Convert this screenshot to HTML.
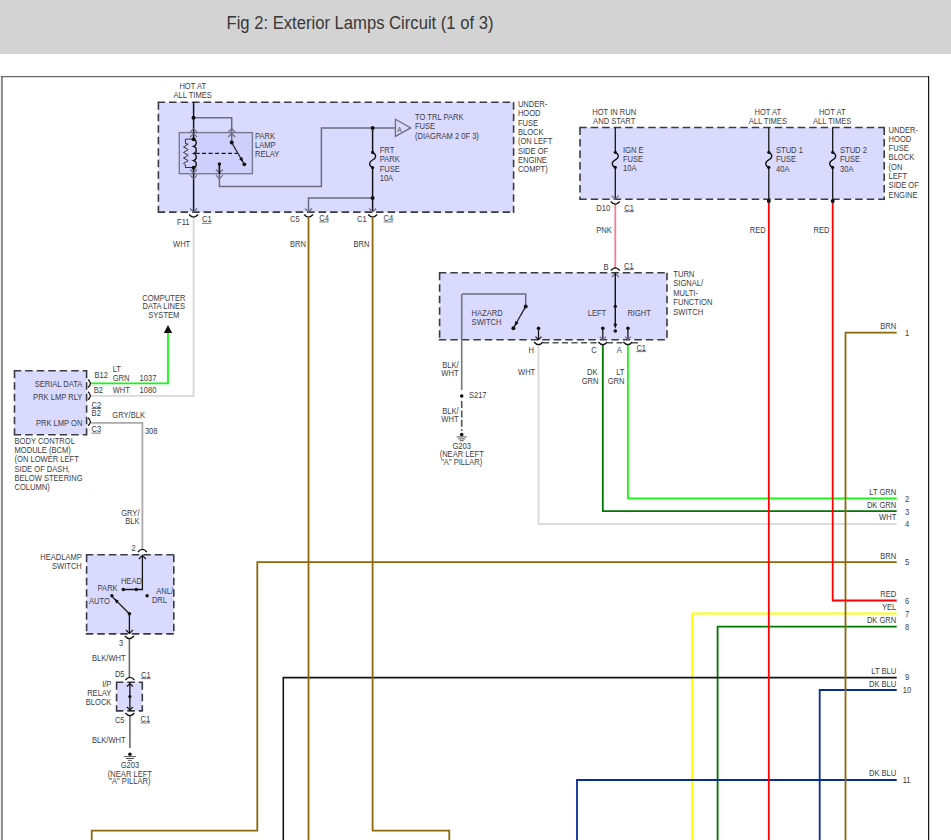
<!DOCTYPE html>
<html><head><meta charset="utf-8"><style>
html,body{margin:0;padding:0;background:#fff;width:951px;height:840px;overflow:hidden}
#hdr{position:absolute;left:0;top:0;width:951px;height:54px;background:#d3d3d3}
svg{position:absolute;left:0;top:0}
text{font-family:"Liberation Sans",sans-serif}
</style></head><body>
<div id="hdr"></div>
<svg width="951" height="840" viewBox="0 0 951 840">
<text x="226.5" y="29.4" font-size="18" fill="#383838" textLength="267" lengthAdjust="spacingAndGlyphs">Fig 2: Exterior Lamps Circuit (1 of 3)</text>
<line x1="1.9" y1="76" x2="1.9" y2="845" stroke="#8a8a8a" stroke-width="2"/><line x1="1" y1="76.6" x2="929" y2="76.6" stroke="#6a6a6a" stroke-width="1.4"/><line x1="928.6" y1="76" x2="928.6" y2="845" stroke="#151515" stroke-width="1.2"/>
<rect x="158.40" y="102.20" width="355.20" height="109.90" fill="#dadaff"/>
<path d="M157.60,102.20H514.40M513.60,102.20V212.90M157.60,212.10H514.40M158.40,102.20V212.90" fill="none" stroke="#3a3a44" stroke-width="1.6" stroke-dasharray="7.5 4"/>
<rect x="580.00" y="127.50" width="304.20" height="71.70" fill="#dadaff"/>
<path d="M579.20,127.50H885.00M884.20,127.50V200.00M579.20,199.20H885.00M580.00,127.50V200.00" fill="none" stroke="#3a3a44" stroke-width="1.6" stroke-dasharray="7.5 4"/>
<rect x="439.60" y="272.80" width="227.40" height="66.90" fill="#dadaff"/>
<path d="M438.80,272.80H667.80M667.00,272.80V340.50M438.80,339.70H667.80M439.60,272.80V340.50" fill="none" stroke="#3a3a44" stroke-width="1.6" stroke-dasharray="7.5 4"/>
<rect x="14.50" y="370.80" width="72.10" height="63.90" fill="#dadaff"/>
<path d="M13.70,370.80H87.40M86.60,370.80V435.50M13.70,434.70H87.40M14.50,370.80V435.50" fill="none" stroke="#3a3a44" stroke-width="1.6" stroke-dasharray="7.5 4"/>
<rect x="86.60" y="554.70" width="87.20" height="79.20" fill="#dadaff"/>
<path d="M85.80,554.70H174.60M173.80,554.70V634.70M85.80,633.90H174.60M86.60,554.70V634.70" fill="none" stroke="#3a3a44" stroke-width="1.6" stroke-dasharray="7.5 4"/>
<rect x="116.60" y="682.30" width="25.70" height="28.60" fill="#dadaff"/>
<path d="M115.80,682.30H143.10M142.30,682.30V711.70M115.80,710.90H143.10M116.60,682.30V711.70" fill="none" stroke="#3a3a44" stroke-width="1.6" stroke-dasharray="7.5 4"/>
<rect x="179.3" y="132.6" width="73.1" height="41.1" fill="#d0d0fc" stroke="#7a7a92" stroke-width="1.4"/>
<polyline points="692.10,842.00 692.10,613.50 896.70,613.50" fill="none" stroke="#ffff00" stroke-width="1.8" stroke-linejoin="miter"/>
<polyline points="717.60,842.00 717.60,626.70 896.70,626.70" fill="none" stroke="#007800" stroke-width="1.8" stroke-linejoin="miter"/>
<polyline points="538.50,344.00 538.50,524.20 896.70,524.20" fill="none" stroke="#d8d8d8" stroke-width="1.8" stroke-linejoin="miter"/>
<polyline points="602.80,344.00 602.80,511.20 896.70,511.20" fill="none" stroke="#007800" stroke-width="1.8" stroke-linejoin="miter"/>
<polyline points="627.90,344.00 627.90,498.30 896.70,498.30" fill="none" stroke="#12fa12" stroke-width="1.8" stroke-linejoin="miter"/>
<polyline points="283.30,842.00 283.30,677.60 896.70,677.60" fill="none" stroke="#141414" stroke-width="1.6" stroke-linejoin="miter"/>
<polyline points="577.00,842.00 577.00,780.00 896.70,780.00" fill="none" stroke="#082c98" stroke-width="1.8" stroke-linejoin="miter"/>
<polyline points="819.70,842.00 819.70,690.00 896.70,690.00" fill="none" stroke="#082c98" stroke-width="1.8" stroke-linejoin="miter"/>
<polyline points="896.70,562.20 257.30,562.20 257.30,830.70 91.70,830.70 91.70,842.00" fill="none" stroke="#8d660e" stroke-width="1.8" stroke-linejoin="miter"/>
<polyline points="308.50,218.00 308.50,842.00" fill="none" stroke="#8d660e" stroke-width="1.8" stroke-linejoin="miter"/>
<polyline points="372.60,218.00 372.60,830.70 449.30,830.70 449.30,842.00" fill="none" stroke="#8d660e" stroke-width="1.8" stroke-linejoin="miter"/>
<polyline points="896.70,332.70 845.50,332.70 845.50,842.00" fill="none" stroke="#8d660e" stroke-width="1.8" stroke-linejoin="miter"/>
<polyline points="768.80,201.00 768.80,842.00" fill="none" stroke="#ff0000" stroke-width="1.8" stroke-linejoin="miter"/>
<polyline points="832.70,201.00 832.70,600.50 896.70,600.50" fill="none" stroke="#ff0000" stroke-width="1.8" stroke-linejoin="miter"/>
<polyline points="615.30,204.00 615.30,269.00" fill="none" stroke="#f57d95" stroke-width="1.8" stroke-linejoin="miter"/>
<polyline points="193.60,217.60 193.60,395.80 91.20,395.80" fill="none" stroke="#d8d8d8" stroke-width="1.8" stroke-linejoin="miter"/>
<polyline points="91.20,383.40 168.00,383.40 168.00,333.00" fill="none" stroke="#12fa12" stroke-width="1.8" stroke-linejoin="miter"/>
<polygon points="168,325 163.8,333 172.2,333" fill="#111"/>
<polyline points="91.20,422.80 142.40,422.80 142.40,550.00" fill="none" stroke="#a9a9a9" stroke-width="1.8" stroke-linejoin="miter"/>
<polyline points="129.40,638.00 129.40,678.00" fill="none" stroke="#6a6a6a" stroke-width="1.6" stroke-linejoin="miter"/>
<polyline points="129.90,715.00 129.90,748.00" fill="none" stroke="#6a6a6a" stroke-width="1.6" stroke-linejoin="miter"/>
<polyline points="461.70,294.10 461.70,390.00" fill="none" stroke="#777" stroke-width="1.6" stroke-linejoin="miter"/>
<line x1="461.7" y1="401" x2="461.7" y2="431" stroke="#555" stroke-width="1.6" stroke-dasharray="7 2.4"/>
<polyline points="193.60,102.00 193.60,139.30" fill="none" stroke="#141414" stroke-width="1.5" stroke-linejoin="miter"/>
<polyline points="193.60,167.70 193.60,212.00" fill="none" stroke="#141414" stroke-width="1.5" stroke-linejoin="miter"/>
<polyline points="193.50,117.80 231.70,117.80 231.70,142.60" fill="none" stroke="#6c6c80" stroke-width="1.5" stroke-linejoin="miter"/>
<polyline points="190.1,132.1 193.6,128.6 197.1,132.1" fill="none" stroke="#6a6a80" stroke-width="1.1"/>
<polyline points="190.1,137.0 193.6,133.5 197.1,137.0" fill="none" stroke="#6a6a80" stroke-width="1.1"/>
<polyline points="228.2,132.1 231.7,128.6 235.2,132.1" fill="none" stroke="#6a6a80" stroke-width="1.1"/>
<polyline points="228.2,137.0 231.7,133.5 235.2,137.0" fill="none" stroke="#6a6a80" stroke-width="1.1"/>
<polyline points="190.1,169.5 193.6,173.0 197.1,169.5" fill="none" stroke="#6a6a80" stroke-width="1.1"/>
<polyline points="190.1,175.1 193.6,178.6 197.1,175.1" fill="none" stroke="#6a6a80" stroke-width="1.1"/>
<polyline points="215.9,169.5 219.4,173.0 222.9,169.5" fill="none" stroke="#6a6a80" stroke-width="1.1"/>
<polyline points="215.9,175.1 219.4,178.6 222.9,175.1" fill="none" stroke="#6a6a80" stroke-width="1.1"/>
<polyline points="190.1,208.5 193.6,212.0 197.1,208.5" fill="none" stroke="#6a6a80" stroke-width="1.1"/>
<path d="M193.6,139.3 C197.2,140.37 197.2,145.34 193.6,146.40 C197.2,147.47 197.2,152.44 193.6,153.50 C197.2,154.56 197.2,159.53 193.6,160.60 C197.2,161.66 197.2,166.63 193.6,167.70" fill="none" stroke="#111" stroke-width="1.3"/>
<polyline points="193.6,139.1 185.4,139.1 185.4,143.6 188.2,144.1 183.5,147.0 188.2,149.6 183.5,152.5 188.2,155.3 183.5,158.0 188.2,160.6 183.5,163.4 185.4,164.9 185.4,167.5 193.6,167.5" fill="none" stroke="#333" stroke-width="1"/>
<line x1="195.6" y1="153.4" x2="237.6" y2="153.4" stroke="#111" stroke-width="1.2" stroke-dasharray="4 2.5"/>
<polyline points="231.70,142.60 244.30,164.30" fill="none" stroke="#222" stroke-width="1.2" stroke-linejoin="miter"/>
<polyline points="219.40,164.00 219.40,186.50 321.40,186.50 321.40,127.90 395.40,127.90" fill="none" stroke="#6c6c80" stroke-width="1.5" stroke-linejoin="miter"/>
<polyline points="219.40,164.00 219.40,174.00" fill="none" stroke="#141414" stroke-width="1.5" stroke-linejoin="miter"/>
<polyline points="372.60,127.90 372.60,152.40" fill="none" stroke="#141414" stroke-width="1.5" stroke-linejoin="miter"/>
<polyline points="372.60,167.60 372.60,212.00" fill="none" stroke="#141414" stroke-width="1.5" stroke-linejoin="miter"/>
<path d="M372.6,152.4 C376.6,154.4 376.6,158.0 372.6,160.0 C368.6,162.0 368.6,165.6 372.6,167.6" fill="none" stroke="#111" stroke-width="1.3"/>
<polyline points="372.60,197.90 308.50,197.90 308.50,212.00" fill="none" stroke="#6c6c80" stroke-width="1.5" stroke-linejoin="miter"/>
<polyline points="305.0,208.5 308.5,212 312.0,208.5" fill="none" stroke="#6a6a80" stroke-width="1.1"/>
<polyline points="369.1,208.5 372.6,212 376.1,208.5" fill="none" stroke="#6a6a80" stroke-width="1.1"/>
<polygon points="395.4,119.3 395.4,136.4 410.7,127.9" fill="none" stroke="#6c6c80" stroke-width="1.3"/>
<text transform="translate(397.20,131.60) scale(0.88,1)" text-anchor="start" font-size="7.5" fill="#555">A</text>
<path d="M189.1,214.5 Q193.6,219.7 198.1,214.5" fill="none" stroke="#111" stroke-width="1.3"/>
<path d="M304.0,214.5 Q308.5,219.7 313.0,214.5" fill="none" stroke="#111" stroke-width="1.3"/>
<path d="M368.1,214.5 Q372.6,219.7 377.1,214.5" fill="none" stroke="#111" stroke-width="1.3"/>
<polyline points="615.30,127.50 615.30,152.40" fill="none" stroke="#141414" stroke-width="1.3" stroke-linejoin="miter"/>
<polyline points="615.30,167.40 615.30,199.20" fill="none" stroke="#141414" stroke-width="1.3" stroke-linejoin="miter"/>
<path d="M615.3,152.3 C619.3,154.3 619.3,157.85000000000002 615.3,159.85000000000002 C611.3,161.85000000000002 611.3,165.4 615.3,167.4" fill="none" stroke="#111" stroke-width="1.3"/>
<polyline points="768.80,127.50 768.80,152.40" fill="none" stroke="#141414" stroke-width="1.3" stroke-linejoin="miter"/>
<polyline points="768.80,167.40 768.80,199.20" fill="none" stroke="#141414" stroke-width="1.3" stroke-linejoin="miter"/>
<path d="M768.8,152.3 C772.8,154.3 772.8,157.85000000000002 768.8,159.85000000000002 C764.8,161.85000000000002 764.8,165.4 768.8,167.4" fill="none" stroke="#111" stroke-width="1.3"/>
<polyline points="832.70,127.50 832.70,152.40" fill="none" stroke="#141414" stroke-width="1.3" stroke-linejoin="miter"/>
<polyline points="832.70,167.40 832.70,199.20" fill="none" stroke="#141414" stroke-width="1.3" stroke-linejoin="miter"/>
<path d="M832.7,152.3 C836.7,154.3 836.7,157.85000000000002 832.7,159.85000000000002 C828.7,161.85000000000002 828.7,165.4 832.7,167.4" fill="none" stroke="#111" stroke-width="1.3"/>
<polyline points="611.8,195.7 615.3,199.2 618.8,195.7" fill="none" stroke="#6a6a80" stroke-width="1.1"/>
<path d="M610.8,201.5 Q615.3,206.7 619.8,201.5" fill="none" stroke="#111" stroke-width="1.3"/>
<path d="M610.8,270.5 Q615.3,265.3 619.8,270.5" fill="none" stroke="#111" stroke-width="1.3"/>
<polyline points="611.8,277.0 615.3,273.5 618.8,277.0" fill="none" stroke="#6a6a80" stroke-width="1.1"/>
<polyline points="615.30,272.80 615.30,326.00" fill="none" stroke="#141414" stroke-width="1.4" stroke-linejoin="miter"/>
<polyline points="462.00,294.10 525.70,294.10 525.70,306.40" fill="none" stroke="#6c6c80" stroke-width="1.5" stroke-linejoin="miter"/>
<polyline points="525.70,306.40 513.40,328.30" fill="none" stroke="#222" stroke-width="1.3" stroke-linejoin="miter"/>
<polyline points="538.50,328.30 538.50,339.70" fill="none" stroke="#141414" stroke-width="1.3" stroke-linejoin="miter"/>
<polyline points="535.5,336.7 538.5,339.7 541.5,336.7" fill="none" stroke="#111" stroke-width="1.1"/>
<path d="M534.0,342 Q538.5,347.2 543.0,342" fill="none" stroke="#111" stroke-width="1.3"/>
<polyline points="602.80,328.30 602.80,339.70" fill="none" stroke="#141414" stroke-width="1.3" stroke-linejoin="miter"/>
<polyline points="599.8,336.7 602.8,339.7 605.8,336.7" fill="none" stroke="#6c6c80" stroke-width="1.1"/>
<path d="M598.3,342 Q602.8,347.2 607.3,342" fill="none" stroke="#111" stroke-width="1.3"/>
<polyline points="627.90,328.30 627.90,339.70" fill="none" stroke="#141414" stroke-width="1.3" stroke-linejoin="miter"/>
<polyline points="624.9,336.7 627.9,339.7 630.9,336.7" fill="none" stroke="#6c6c80" stroke-width="1.1"/>
<path d="M623.4,342 Q627.9,347.2 632.4,342" fill="none" stroke="#111" stroke-width="1.3"/>
<line x1="543" y1="342.8" x2="598" y2="342.8" stroke="#555" stroke-width="1.5" stroke-dasharray="6 3.5"/>
<line x1="607" y1="342.8" x2="623.5" y2="342.8" stroke="#555" stroke-width="1.5" stroke-dasharray="6 3.5"/>
<line x1="632" y1="342.8" x2="641" y2="342.8" stroke="#555" stroke-width="1.5" stroke-dasharray="6 3.5"/>
<line x1="456.7" y1="436.9" x2="466.7" y2="436.9" stroke="#444" stroke-width="0.9"/>
<line x1="458.2" y1="438.9" x2="465.2" y2="438.9" stroke="#444" stroke-width="0.9"/>
<line x1="459.7" y1="440.7" x2="463.7" y2="440.7" stroke="#444" stroke-width="0.9"/>
<path d="M88.0,379.4 Q92.8,383.4 88.0,387.4" fill="none" stroke="#111" stroke-width="1.3"/>
<path d="M88.0,391.8 Q92.8,395.8 88.0,399.8" fill="none" stroke="#111" stroke-width="1.3"/>
<path d="M88.0,417.7 Q92.8,421.7 88.0,425.7" fill="none" stroke="#111" stroke-width="1.3"/>
<path d="M137.9,552 Q142.4,546.8 146.9,552" fill="none" stroke="#111" stroke-width="1.3"/>
<polyline points="138.9,559.0 142.4,555.5 145.9,559.0" fill="none" stroke="#111" stroke-width="1.1"/>
<polyline points="142.40,554.70 142.40,589.50 123.30,589.50" fill="none" stroke="#141414" stroke-width="1.3" stroke-linejoin="miter"/>
<polyline points="129.40,613.70 112.50,597.00" fill="none" stroke="#222" stroke-width="1.3" stroke-linejoin="miter"/>
<polyline points="129.40,613.70 129.40,634.00" fill="none" stroke="#141414" stroke-width="1.3" stroke-linejoin="miter"/>
<polyline points="125.9,630.0 129.4,633.5 132.9,630.0" fill="none" stroke="#111" stroke-width="1.1"/>
<path d="M124.9,636 Q129.4,641.2 133.9,636" fill="none" stroke="#111" stroke-width="1.3"/>
<path d="M125.4,680 Q129.9,674.8 134.4,680" fill="none" stroke="#111" stroke-width="1.3"/>
<path d="M125.4,713 Q129.9,718.2 134.4,713" fill="none" stroke="#111" stroke-width="1.3"/>
<polyline points="129.90,682.30 129.90,710.90" fill="none" stroke="#141414" stroke-width="1.3" stroke-linejoin="miter"/>
<polyline points="126.9,686.5 129.9,683.5 132.9,686.5" fill="none" stroke="#111" stroke-width="1.1"/>
<polyline points="126.9,707 129.9,710 132.9,707" fill="none" stroke="#111" stroke-width="1.1"/>
<line x1="123.9" y1="756.6" x2="135.9" y2="756.6" stroke="#444" stroke-width="0.9"/>
<line x1="125.9" y1="758.5" x2="133.9" y2="758.5" stroke="#444" stroke-width="0.9"/>
<line x1="127.9" y1="760.4" x2="131.9" y2="760.4" stroke="#444" stroke-width="0.9"/>
<text transform="translate(192.70,89.00) scale(0.88,1)" text-anchor="middle" font-size="8.6" fill="#3c3c46">HOT AT</text>
<text transform="translate(192.70,97.90) scale(0.88,1)" text-anchor="middle" font-size="8.6" fill="#3c3c46">ALL TIMES</text>
<text transform="translate(255.00,139.00) scale(0.88,1)" text-anchor="start" font-size="8.6" fill="#3c3c46">PARK</text>
<text transform="translate(255.00,148.00) scale(0.88,1)" text-anchor="start" font-size="8.6" fill="#3c3c46">LAMP</text>
<text transform="translate(255.00,157.00) scale(0.88,1)" text-anchor="start" font-size="8.6" fill="#3c3c46">RELAY</text>
<text transform="translate(415.00,120.00) scale(0.88,1)" text-anchor="start" font-size="8.6" fill="#3c3c46">TO TRL PARK</text>
<text transform="translate(415.00,129.30) scale(0.88,1)" text-anchor="start" font-size="8.6" fill="#3c3c46">FUSE</text>
<text transform="translate(415.00,138.60) scale(0.88,1)" text-anchor="start" font-size="8.6" fill="#3c3c46">(DIAGRAM 2 0F 3)</text>
<text transform="translate(379.70,152.90) scale(0.88,1)" text-anchor="start" font-size="8.6" fill="#3c3c46">FRT</text>
<text transform="translate(379.70,162.20) scale(0.88,1)" text-anchor="start" font-size="8.6" fill="#3c3c46">PARK</text>
<text transform="translate(379.70,171.50) scale(0.88,1)" text-anchor="start" font-size="8.6" fill="#3c3c46">FUSE</text>
<text transform="translate(379.70,180.80) scale(0.88,1)" text-anchor="start" font-size="8.6" fill="#3c3c46">10A</text>
<text transform="translate(517.90,106.90) scale(0.88,1)" text-anchor="start" font-size="8.6" fill="#3c3c46">UNDER-</text>
<text transform="translate(517.90,116.26) scale(0.88,1)" text-anchor="start" font-size="8.6" fill="#3c3c46">HOOD</text>
<text transform="translate(517.90,125.62) scale(0.88,1)" text-anchor="start" font-size="8.6" fill="#3c3c46">FUSE</text>
<text transform="translate(517.90,134.98) scale(0.88,1)" text-anchor="start" font-size="8.6" fill="#3c3c46">BLOCK</text>
<text transform="translate(517.90,144.34) scale(0.88,1)" text-anchor="start" font-size="8.6" fill="#3c3c46">(ON LEFT</text>
<text transform="translate(517.90,153.70) scale(0.88,1)" text-anchor="start" font-size="8.6" fill="#3c3c46">SIDE OF</text>
<text transform="translate(517.90,163.06) scale(0.88,1)" text-anchor="start" font-size="8.6" fill="#3c3c46">ENGINE</text>
<text transform="translate(517.90,172.42) scale(0.88,1)" text-anchor="start" font-size="8.6" fill="#3c3c46">COMPT)</text>
<text transform="translate(177.10,224.70) scale(0.88,1)" text-anchor="start" font-size="8.6" fill="#3c3c46">F11</text>
<text transform="translate(202.00,222.40) scale(0.88,1)" text-anchor="start" font-size="8.6" fill="#3c3c46">C1</text>
<line x1="202.00" y1="223.30" x2="211.38" y2="223.30" stroke="#3c3c46" stroke-width="0.7"/>
<text transform="translate(173.00,246.70) scale(0.88,1)" text-anchor="start" font-size="8.6" fill="#3c3c46">WHT</text>
<text transform="translate(290.00,222.00) scale(0.88,1)" text-anchor="start" font-size="8.6" fill="#3c3c46">C5</text>
<text transform="translate(319.30,221.00) scale(0.88,1)" text-anchor="start" font-size="8.6" fill="#3c3c46">C4</text>
<line x1="319.30" y1="221.90" x2="328.68" y2="221.90" stroke="#3c3c46" stroke-width="0.7"/>
<text transform="translate(357.00,222.40) scale(0.88,1)" text-anchor="start" font-size="8.6" fill="#3c3c46">C1</text>
<text transform="translate(383.60,221.00) scale(0.88,1)" text-anchor="start" font-size="8.6" fill="#3c3c46">C4</text>
<line x1="383.60" y1="221.90" x2="392.98" y2="221.90" stroke="#3c3c46" stroke-width="0.7"/>
<text transform="translate(290.00,246.70) scale(0.88,1)" text-anchor="start" font-size="8.6" fill="#3c3c46">BRN</text>
<text transform="translate(353.50,246.70) scale(0.88,1)" text-anchor="start" font-size="8.6" fill="#3c3c46">BRN</text>
<text transform="translate(614.20,115.00) scale(0.88,1)" text-anchor="middle" font-size="8.6" fill="#3c3c46">HOT IN RUN</text>
<text transform="translate(614.20,123.80) scale(0.88,1)" text-anchor="middle" font-size="8.6" fill="#3c3c46">AND START</text>
<text transform="translate(623.00,152.50) scale(0.88,1)" text-anchor="start" font-size="8.6" fill="#3c3c46">IGN E</text>
<text transform="translate(623.00,161.90) scale(0.88,1)" text-anchor="start" font-size="8.6" fill="#3c3c46">FUSE</text>
<text transform="translate(623.00,171.30) scale(0.88,1)" text-anchor="start" font-size="8.6" fill="#3c3c46">10A</text>
<text transform="translate(767.80,114.80) scale(0.88,1)" text-anchor="middle" font-size="8.6" fill="#3c3c46">HOT AT</text>
<text transform="translate(767.80,123.70) scale(0.88,1)" text-anchor="middle" font-size="8.6" fill="#3c3c46">ALL TIMES</text>
<text transform="translate(832.20,114.80) scale(0.88,1)" text-anchor="middle" font-size="8.6" fill="#3c3c46">HOT AT</text>
<text transform="translate(832.20,123.70) scale(0.88,1)" text-anchor="middle" font-size="8.6" fill="#3c3c46">ALL TIMES</text>
<text transform="translate(776.00,153.00) scale(0.88,1)" text-anchor="start" font-size="8.6" fill="#3c3c46">STUD 1</text>
<text transform="translate(776.00,162.45) scale(0.88,1)" text-anchor="start" font-size="8.6" fill="#3c3c46">FUSE</text>
<text transform="translate(776.00,171.90) scale(0.88,1)" text-anchor="start" font-size="8.6" fill="#3c3c46">40A</text>
<text transform="translate(840.00,153.00) scale(0.88,1)" text-anchor="start" font-size="8.6" fill="#3c3c46">STUD 2</text>
<text transform="translate(840.00,162.45) scale(0.88,1)" text-anchor="start" font-size="8.6" fill="#3c3c46">FUSE</text>
<text transform="translate(840.00,171.90) scale(0.88,1)" text-anchor="start" font-size="8.6" fill="#3c3c46">30A</text>
<text transform="translate(888.60,132.70) scale(0.88,1)" text-anchor="start" font-size="8.6" fill="#3c3c46">UNDER-</text>
<text transform="translate(888.60,141.96) scale(0.88,1)" text-anchor="start" font-size="8.6" fill="#3c3c46">HOOD</text>
<text transform="translate(888.60,151.22) scale(0.88,1)" text-anchor="start" font-size="8.6" fill="#3c3c46">FUSE</text>
<text transform="translate(888.60,160.48) scale(0.88,1)" text-anchor="start" font-size="8.6" fill="#3c3c46">BLOCK</text>
<text transform="translate(888.60,169.74) scale(0.88,1)" text-anchor="start" font-size="8.6" fill="#3c3c46">(ON</text>
<text transform="translate(888.60,179.00) scale(0.88,1)" text-anchor="start" font-size="8.6" fill="#3c3c46">LEFT</text>
<text transform="translate(888.60,188.26) scale(0.88,1)" text-anchor="start" font-size="8.6" fill="#3c3c46">SIDE OF</text>
<text transform="translate(888.60,197.52) scale(0.88,1)" text-anchor="start" font-size="8.6" fill="#3c3c46">ENGINE</text>
<text transform="translate(596.30,211.30) scale(0.88,1)" text-anchor="start" font-size="8.6" fill="#3c3c46">D10</text>
<text transform="translate(624.20,210.80) scale(0.88,1)" text-anchor="start" font-size="8.6" fill="#3c3c46">C1</text>
<line x1="624.20" y1="211.70" x2="633.58" y2="211.70" stroke="#3c3c46" stroke-width="0.7"/>
<text transform="translate(596.30,232.50) scale(0.88,1)" text-anchor="start" font-size="8.6" fill="#3c3c46">PNK</text>
<text transform="translate(749.80,232.50) scale(0.88,1)" text-anchor="start" font-size="8.6" fill="#3c3c46">RED</text>
<text transform="translate(813.50,232.50) scale(0.88,1)" text-anchor="start" font-size="8.6" fill="#3c3c46">RED</text>
<text transform="translate(603.60,270.00) scale(0.88,1)" text-anchor="start" font-size="8.6" fill="#3c3c46">B</text>
<text transform="translate(624.10,268.70) scale(0.88,1)" text-anchor="start" font-size="8.6" fill="#3c3c46">C1</text>
<line x1="624.10" y1="269.60" x2="633.48" y2="269.60" stroke="#3c3c46" stroke-width="0.7"/>
<text transform="translate(673.30,276.80) scale(0.88,1)" text-anchor="start" font-size="8.6" fill="#3c3c46">TURN</text>
<text transform="translate(673.30,286.30) scale(0.88,1)" text-anchor="start" font-size="8.6" fill="#3c3c46">SIGNAL/</text>
<text transform="translate(673.30,295.80) scale(0.88,1)" text-anchor="start" font-size="8.6" fill="#3c3c46">MULTI-</text>
<text transform="translate(673.30,305.30) scale(0.88,1)" text-anchor="start" font-size="8.6" fill="#3c3c46">FUNCTION</text>
<text transform="translate(673.30,314.80) scale(0.88,1)" text-anchor="start" font-size="8.6" fill="#3c3c46">SWITCH</text>
<text transform="translate(471.60,315.70) scale(0.88,1)" text-anchor="start" font-size="8.6" fill="#3c3c46">HAZARD</text>
<text transform="translate(471.60,324.70) scale(0.88,1)" text-anchor="start" font-size="8.6" fill="#3c3c46">SWITCH</text>
<text transform="translate(587.70,315.70) scale(0.88,1)" text-anchor="start" font-size="8.6" fill="#3c3c46">LEFT</text>
<text transform="translate(627.40,315.70) scale(0.88,1)" text-anchor="start" font-size="8.6" fill="#3c3c46">RIGHT</text>
<text transform="translate(528.40,352.90) scale(0.88,1)" text-anchor="start" font-size="8.6" fill="#3c3c46">H</text>
<text transform="translate(591.30,352.90) scale(0.88,1)" text-anchor="start" font-size="8.6" fill="#3c3c46">C</text>
<text transform="translate(616.70,352.90) scale(0.88,1)" text-anchor="start" font-size="8.6" fill="#3c3c46">A</text>
<text transform="translate(636.40,350.70) scale(0.88,1)" text-anchor="start" font-size="8.6" fill="#3c3c46">C1</text>
<line x1="636.40" y1="351.60" x2="645.78" y2="351.60" stroke="#3c3c46" stroke-width="0.7"/>
<text transform="translate(518.00,374.50) scale(0.88,1)" text-anchor="start" font-size="8.6" fill="#3c3c46">WHT</text>
<text transform="translate(597.50,374.50) scale(0.88,1)" text-anchor="end" font-size="8.6" fill="#3c3c46">DK</text>
<text transform="translate(598.50,384.00) scale(0.88,1)" text-anchor="end" font-size="8.6" fill="#3c3c46">GRN</text>
<text transform="translate(624.50,374.50) scale(0.88,1)" text-anchor="end" font-size="8.6" fill="#3c3c46">LT</text>
<text transform="translate(624.50,384.00) scale(0.88,1)" text-anchor="end" font-size="8.6" fill="#3c3c46">GRN</text>
<text transform="translate(458.60,367.90) scale(0.88,1)" text-anchor="end" font-size="8.6" fill="#3c3c46">BLK/</text>
<text transform="translate(458.60,376.40) scale(0.88,1)" text-anchor="end" font-size="8.6" fill="#3c3c46">WHT</text>
<text transform="translate(458.60,413.60) scale(0.88,1)" text-anchor="end" font-size="8.6" fill="#3c3c46">BLK/</text>
<text transform="translate(458.60,422.10) scale(0.88,1)" text-anchor="end" font-size="8.6" fill="#3c3c46">WHT</text>
<text transform="translate(468.90,397.90) scale(0.88,1)" text-anchor="start" font-size="8.6" fill="#3c3c46">S217</text>
<text transform="translate(461.70,448.60) scale(0.88,1)" text-anchor="middle" font-size="8.6" fill="#3c3c46">G203</text>
<text transform="translate(461.70,456.80) scale(0.88,1)" text-anchor="middle" font-size="8.6" fill="#3c3c46">(NEAR LEFT</text>
<text transform="translate(461.70,465.00) scale(0.88,1)" text-anchor="middle" font-size="8.6" fill="#3c3c46">&quot;A&quot; PILLAR)</text>
<text transform="translate(163.80,300.80) scale(0.88,1)" text-anchor="middle" font-size="8.6" fill="#3c3c46">COMPUTER</text>
<text transform="translate(163.80,309.20) scale(0.88,1)" text-anchor="middle" font-size="8.6" fill="#3c3c46">DATA LINES</text>
<text transform="translate(163.80,317.60) scale(0.88,1)" text-anchor="middle" font-size="8.6" fill="#3c3c46">SYSTEM</text>
<text transform="translate(82.40,387.00) scale(0.88,1)" text-anchor="end" font-size="8.6" fill="#3c3c46">SERIAL DATA</text>
<text transform="translate(82.40,399.60) scale(0.88,1)" text-anchor="end" font-size="8.6" fill="#3c3c46">PRK LMP RLY</text>
<text transform="translate(82.40,425.50) scale(0.88,1)" text-anchor="end" font-size="8.6" fill="#3c3c46">PRK LMP ON</text>
<text transform="translate(94.40,377.50) scale(0.88,1)" text-anchor="start" font-size="8.6" fill="#3c3c46">B12</text>
<text transform="translate(112.70,372.00) scale(0.88,1)" text-anchor="start" font-size="8.6" fill="#3c3c46">LT</text>
<text transform="translate(112.70,380.70) scale(0.88,1)" text-anchor="start" font-size="8.6" fill="#3c3c46">GRN</text>
<text transform="translate(139.60,380.70) scale(0.88,1)" text-anchor="start" font-size="8.6" fill="#3c3c46">1037</text>
<text transform="translate(93.70,393.30) scale(0.88,1)" text-anchor="start" font-size="8.6" fill="#3c3c46">B2</text>
<text transform="translate(112.70,393.30) scale(0.88,1)" text-anchor="start" font-size="8.6" fill="#3c3c46">WHT</text>
<text transform="translate(139.60,393.30) scale(0.88,1)" text-anchor="start" font-size="8.6" fill="#3c3c46">1080</text>
<text transform="translate(91.60,407.60) scale(0.88,1)" text-anchor="start" font-size="8.6" fill="#3c3c46">C2</text>
<line x1="91.60" y1="408.50" x2="100.98" y2="408.50" stroke="#3c3c46" stroke-width="0.7"/>
<text transform="translate(91.60,416.40) scale(0.88,1)" text-anchor="start" font-size="8.6" fill="#3c3c46">B2</text>
<text transform="translate(112.30,417.50) scale(0.88,1)" text-anchor="start" font-size="8.6" fill="#3c3c46">GRY/BLK</text>
<text transform="translate(91.60,432.20) scale(0.88,1)" text-anchor="start" font-size="8.6" fill="#3c3c46">C3</text>
<line x1="91.60" y1="433.10" x2="100.98" y2="433.10" stroke="#3c3c46" stroke-width="0.7"/>
<text transform="translate(144.90,434.30) scale(0.88,1)" text-anchor="start" font-size="8.6" fill="#3c3c46">308</text>
<text transform="translate(14.50,443.80) scale(0.88,1)" text-anchor="start" font-size="8.6" fill="#3c3c46">BODY CONTROL</text>
<text transform="translate(14.50,453.10) scale(0.88,1)" text-anchor="start" font-size="8.6" fill="#3c3c46">MODULE (BCM)</text>
<text transform="translate(14.50,462.40) scale(0.88,1)" text-anchor="start" font-size="8.6" fill="#3c3c46">(ON LOWER LEFT</text>
<text transform="translate(14.50,471.70) scale(0.88,1)" text-anchor="start" font-size="8.6" fill="#3c3c46">SIDE OF DASH,</text>
<text transform="translate(14.50,481.00) scale(0.88,1)" text-anchor="start" font-size="8.6" fill="#3c3c46">BELOW STEERING</text>
<text transform="translate(14.50,490.30) scale(0.88,1)" text-anchor="start" font-size="8.6" fill="#3c3c46">COLUMN)</text>
<text transform="translate(139.50,515.80) scale(0.88,1)" text-anchor="end" font-size="8.6" fill="#3c3c46">GRY/</text>
<text transform="translate(139.50,524.40) scale(0.88,1)" text-anchor="end" font-size="8.6" fill="#3c3c46">BLK</text>
<text transform="translate(131.50,550.50) scale(0.88,1)" text-anchor="start" font-size="8.6" fill="#3c3c46">2</text>
<text transform="translate(81.80,559.60) scale(0.88,1)" text-anchor="end" font-size="8.6" fill="#3c3c46">HEADLAMP</text>
<text transform="translate(81.80,568.60) scale(0.88,1)" text-anchor="end" font-size="8.6" fill="#3c3c46">SWITCH</text>
<text transform="translate(120.90,583.80) scale(0.88,1)" text-anchor="start" font-size="8.6" fill="#3c3c46">HEAD</text>
<text transform="translate(97.60,591.00) scale(0.88,1)" text-anchor="start" font-size="8.6" fill="#3c3c46">PARK</text>
<text transform="translate(156.30,593.70) scale(0.88,1)" text-anchor="start" font-size="8.6" fill="#3c3c46">ANL/</text>
<text transform="translate(151.90,602.50) scale(0.88,1)" text-anchor="start" font-size="8.6" fill="#3c3c46">DRL</text>
<text transform="translate(89.00,603.80) scale(0.88,1)" text-anchor="start" font-size="8.6" fill="#3c3c46">AUTO</text>
<text transform="translate(119.10,645.70) scale(0.88,1)" text-anchor="start" font-size="8.6" fill="#3c3c46">3</text>
<text transform="translate(125.70,661.30) scale(0.88,1)" text-anchor="end" font-size="8.6" fill="#3c3c46">BLK/WHT</text>
<text transform="translate(114.90,676.60) scale(0.88,1)" text-anchor="start" font-size="8.6" fill="#3c3c46">D5</text>
<text transform="translate(141.00,677.70) scale(0.88,1)" text-anchor="start" font-size="8.6" fill="#3c3c46">C1</text>
<line x1="141.00" y1="678.60" x2="150.38" y2="678.60" stroke="#3c3c46" stroke-width="0.7"/>
<text transform="translate(111.40,686.70) scale(0.88,1)" text-anchor="end" font-size="8.6" fill="#3c3c46">I/P</text>
<text transform="translate(111.40,696.00) scale(0.88,1)" text-anchor="end" font-size="8.6" fill="#3c3c46">RELAY</text>
<text transform="translate(111.40,705.30) scale(0.88,1)" text-anchor="end" font-size="8.6" fill="#3c3c46">BLOCK</text>
<text transform="translate(114.90,723.20) scale(0.88,1)" text-anchor="start" font-size="8.6" fill="#3c3c46">C5</text>
<text transform="translate(140.60,722.00) scale(0.88,1)" text-anchor="start" font-size="8.6" fill="#3c3c46">C1</text>
<line x1="140.60" y1="722.90" x2="149.98" y2="722.90" stroke="#3c3c46" stroke-width="0.7"/>
<text transform="translate(125.70,742.50) scale(0.88,1)" text-anchor="end" font-size="8.6" fill="#3c3c46">BLK/WHT</text>
<text transform="translate(129.90,767.80) scale(0.88,1)" text-anchor="middle" font-size="8.6" fill="#3c3c46">G203</text>
<text transform="translate(129.90,776.80) scale(0.88,1)" text-anchor="middle" font-size="8.6" fill="#3c3c46">(NEAR LEFT</text>
<text transform="translate(129.90,784.00) scale(0.88,1)" text-anchor="middle" font-size="8.6" fill="#3c3c46">&quot;A&quot; PILLAR)</text>
<text transform="translate(896.30,329.00) scale(0.88,1)" text-anchor="end" font-size="8.6" fill="#3c3c46">BRN</text>
<text transform="translate(905.00,335.50) scale(0.88,1)" text-anchor="start" font-size="8.6" fill="#3c3c46">1</text>
<text transform="translate(896.30,495.00) scale(0.88,1)" text-anchor="end" font-size="8.6" fill="#3c3c46">LT GRN</text>
<text transform="translate(905.00,501.70) scale(0.88,1)" text-anchor="start" font-size="8.6" fill="#3c3c46">2</text>
<text transform="translate(896.30,507.50) scale(0.88,1)" text-anchor="end" font-size="8.6" fill="#3c3c46">DK GRN</text>
<text transform="translate(905.00,514.70) scale(0.88,1)" text-anchor="start" font-size="8.6" fill="#3c3c46">3</text>
<text transform="translate(896.30,519.70) scale(0.88,1)" text-anchor="end" font-size="8.6" fill="#3c3c46">WHT</text>
<text transform="translate(905.00,526.70) scale(0.88,1)" text-anchor="start" font-size="8.6" fill="#3c3c46">4</text>
<text transform="translate(896.30,558.70) scale(0.88,1)" text-anchor="end" font-size="8.6" fill="#3c3c46">BRN</text>
<text transform="translate(905.00,565.30) scale(0.88,1)" text-anchor="start" font-size="8.6" fill="#3c3c46">5</text>
<text transform="translate(896.30,596.70) scale(0.88,1)" text-anchor="end" font-size="8.6" fill="#3c3c46">RED</text>
<text transform="translate(905.00,603.70) scale(0.88,1)" text-anchor="start" font-size="8.6" fill="#3c3c46">6</text>
<text transform="translate(896.30,609.70) scale(0.88,1)" text-anchor="end" font-size="8.6" fill="#3c3c46">YEL</text>
<text transform="translate(905.00,616.70) scale(0.88,1)" text-anchor="start" font-size="8.6" fill="#3c3c46">7</text>
<text transform="translate(896.30,622.50) scale(0.88,1)" text-anchor="end" font-size="8.6" fill="#3c3c46">DK GRN</text>
<text transform="translate(905.00,629.50) scale(0.88,1)" text-anchor="start" font-size="8.6" fill="#3c3c46">8</text>
<text transform="translate(896.30,673.50) scale(0.88,1)" text-anchor="end" font-size="8.6" fill="#3c3c46">LT BLU</text>
<text transform="translate(905.00,680.30) scale(0.88,1)" text-anchor="start" font-size="8.6" fill="#3c3c46">9</text>
<text transform="translate(896.30,686.50) scale(0.88,1)" text-anchor="end" font-size="8.6" fill="#3c3c46">DK BLU</text>
<text transform="translate(902.70,693.00) scale(0.88,1)" text-anchor="start" font-size="8.6" fill="#3c3c46">10</text>
<text transform="translate(896.30,776.00) scale(0.88,1)" text-anchor="end" font-size="8.6" fill="#3c3c46">DK BLU</text>
<text transform="translate(902.70,782.50) scale(0.88,1)" text-anchor="start" font-size="8.6" fill="#3c3c46">11</text>
<circle cx="461.70" cy="396.00" r="1.8" fill="#111"/>
<circle cx="193.50" cy="117.80" r="2.0" fill="#111"/>
<circle cx="193.60" cy="139.30" r="2.0" fill="#111"/>
<circle cx="193.60" cy="167.70" r="2.0" fill="#111"/>
<circle cx="231.70" cy="142.60" r="2.0" fill="#111"/>
<circle cx="244.30" cy="164.30" r="1.9" fill="#111"/>
<polygon points="243.20,162.40 239.04,159.03 242.33,157.12" fill="#111"/>
<circle cx="219.40" cy="164.00" r="1.7" fill="#111"/>
<circle cx="372.60" cy="152.40" r="1.6" fill="#111"/>
<circle cx="372.60" cy="167.60" r="1.6" fill="#111"/>
<circle cx="372.60" cy="127.90" r="2.0" fill="#111"/>
<circle cx="372.60" cy="197.90" r="2.0" fill="#111"/>
<circle cx="615.30" cy="152.30" r="1.6" fill="#111"/>
<circle cx="615.30" cy="167.40" r="1.6" fill="#111"/>
<circle cx="768.80" cy="152.30" r="1.6" fill="#111"/>
<circle cx="768.80" cy="167.40" r="1.6" fill="#111"/>
<circle cx="832.70" cy="152.30" r="1.6" fill="#111"/>
<circle cx="832.70" cy="167.40" r="1.6" fill="#111"/>
<circle cx="768.80" cy="200.90" r="2.0" fill="#111"/>
<circle cx="832.70" cy="200.90" r="2.0" fill="#111"/>
<circle cx="615.30" cy="306.40" r="1.7" fill="#111"/>
<circle cx="615.30" cy="331.00" r="1.8" fill="#111"/>
<polygon points="615.30,328.80 613.40,323.80 617.20,323.80" fill="#111"/>
<circle cx="525.70" cy="306.40" r="2.0" fill="#111"/>
<circle cx="513.40" cy="328.30" r="2.0" fill="#111"/>
<polygon points="514.48,326.38 515.27,321.09 518.58,322.95" fill="#111"/>
<circle cx="538.50" cy="328.30" r="1.8" fill="#111"/>
<circle cx="602.80" cy="328.30" r="1.8" fill="#111"/>
<circle cx="627.90" cy="328.30" r="1.8" fill="#111"/>
<circle cx="461.70" cy="434.60" r="1.8" fill="#111"/>
<circle cx="123.30" cy="589.50" r="1.7" fill="#111"/>
<circle cx="136.30" cy="589.50" r="1.7" fill="#111"/>
<circle cx="111.90" cy="595.80" r="1.7" fill="#111"/>
<circle cx="147.10" cy="595.80" r="1.7" fill="#111"/>
<circle cx="129.40" cy="613.70" r="1.8" fill="#111"/>
<polygon points="114.06,598.55 118.96,600.71 116.29,603.41" fill="#111"/>
<circle cx="129.90" cy="696.60" r="1.6" fill="#111"/>
<circle cx="129.90" cy="754.30" r="1.8" fill="#111"/>
</svg>
</body></html>
